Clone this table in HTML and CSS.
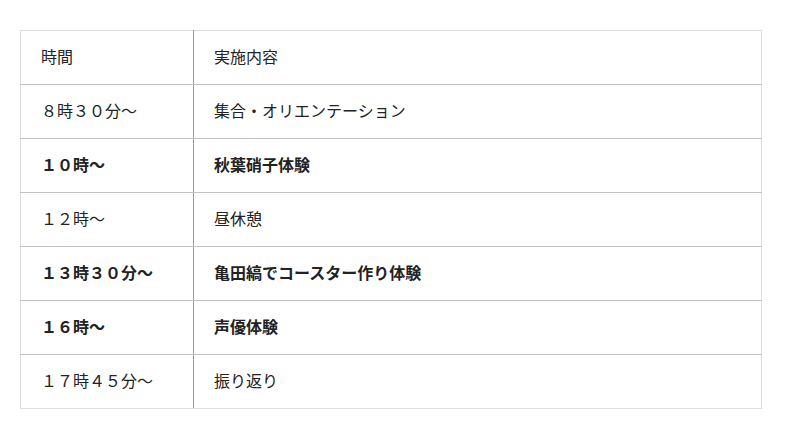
FILE: index.html
```html
<!DOCTYPE html>
<html lang="ja">
<head>
    <meta charset="UTF-8">
    <title>スケジュール</title>
    <link rel="stylesheet" href="styles.css">
</head>
<body>
    <table class="schedule">
        <tr>
            <td class="time">時間</td>
            <td class="event">実施内容</td>
        </tr>
        <tr>
            <td class="time">８時３０分～</td>
            <td class="event">集合・オリエンテーション</td>
        </tr>
        <tr class="main">
            <td class="time">１０時～</td>
            <td class="event">秋葉硝子体験</td>
        </tr>
        <tr>
            <td class="time">１２時～</td>
            <td class="event">昼休憩</td>
        </tr>
        <tr class="main">
            <td class="time">１３時３０分～</td>
            <td class="event">亀田縞でコースター作り体験</td>
        </tr>
        <tr class="main">
            <td class="time">１６時～</td>
            <td class="event">声優体験</td>
        </tr>
        <tr>
            <td class="time">１７時４５分～</td>
            <td class="event">振り返り</td>
        </tr>
    </table>
</body>
</html>
```

FILE: styles.css
```css
body {
    margin: 0;
    background: #fff;
    font-family: "Noto Sans CJK JP", "Noto Sans", sans-serif;
    color: #222;
}
.schedule {
    margin: 30px 0 0 20px;
    width: 742px;
    border-collapse: collapse;
    font-size: 16px;
}
.schedule td {
    height: 50px;
    padding: 0 20px 3px;
    border-top: 1px solid #c2c2c2;
    border-bottom: 1px solid #c2c2c2;
    vertical-align: middle;
    line-height: 1;
}
.schedule tr:first-child td { border-top-color: #dedede; }
.schedule tr:last-child td { border-bottom-color: #dedede; }
.schedule .time {
    width: 132px;
    border-left: 1px solid #dedede;
    border-right: 1px solid #999;
}
.schedule .event {
    border-right: 1px solid #dedede;
}
.main td { font-weight: bold; }
```
